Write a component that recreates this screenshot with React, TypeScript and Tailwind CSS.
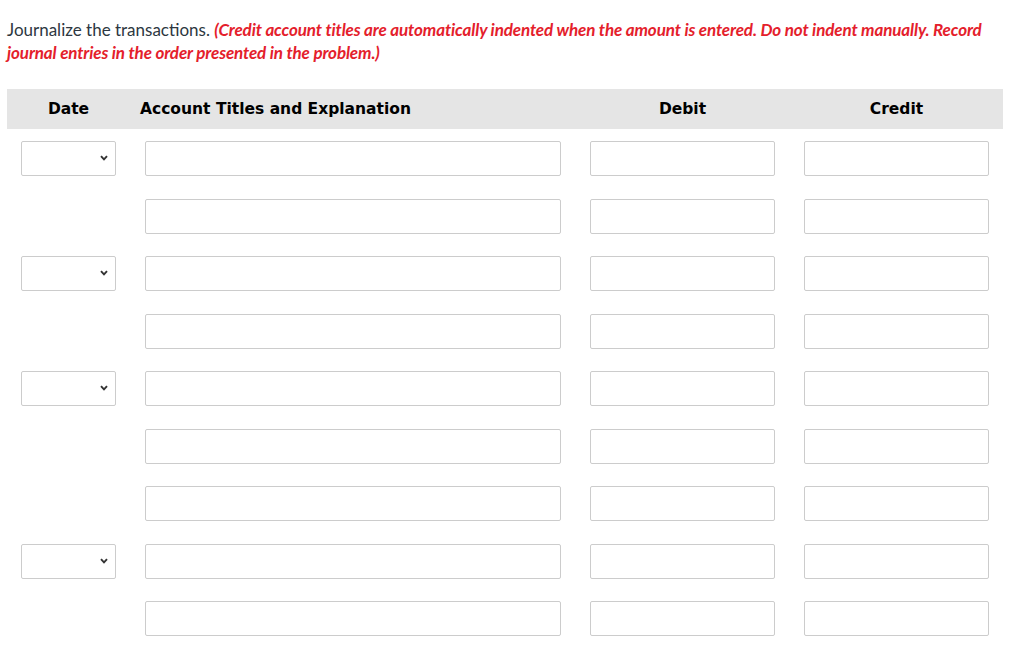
import React from 'react'

const ROWS = [true, false, true, false, true, false, false, true, false]

function DateSelect() {
  return (
    <div className="relative w-[95px] h-[35px] rounded-[2px] border border-[#cccccc] bg-white">
      <svg
        className="absolute right-[7px] top-[13px]"
        width="8"
        height="6"
        viewBox="0 0 8 6"
        fill="none"
      >
        <path d="M1 1.2L4 4.4L7 1.2" stroke="#333333" strokeWidth="1.9" />
      </svg>
    </div>
  )
}

function Box({ w }: { w: string }) {
  return <div className={`${w} h-[35px] rounded-[2px] border border-[#cccccc] bg-white`} />
}

export default function App() {
  return (
    <div className="min-h-screen bg-white pl-[7px] pr-[21px] pt-[18px]" style={{ fontFamily: 'Lato, "Open Sans", sans-serif' }}>
      <p className="text-[17px] leading-[23px] text-[#2d3741]">
        Journalize the transactions.{' '}
        <span className="font-bold italic text-[#e4202b] tracking-[-0.12px]">
          (Credit account titles are automatically indented when the amount is entered. Do not indent manually. Record journal entries in the order presented in the problem.)
        </span>
      </p>

      <div className="mt-[25px] w-[996px]">
        <div
          className="grid grid-cols-[123px_445px_215px_213px] h-[40px] items-center pt-[1px] bg-[#e5e5e5] text-[15.5px] font-bold text-black"
          style={{ fontFamily: 'Tahoma, "DejaVu Sans", Verdana, sans-serif' }}
        >
          <div className="text-center">Date</div>
          <div className="pl-[10px]">Account Titles and Explanation</div>
          <div className="text-center">Debit</div>
          <div className="text-center">Credit</div>
        </div>

        <div className="mt-[12px] flex flex-col gap-[22.5px]">
          {ROWS.map((hasDate, i) => (
            <div key={i} className="grid grid-cols-[123px_445px_215px_213px] items-center">
              <div className="flex justify-center">{hasDate && <DateSelect />}</div>
              <div className="pl-[15px]">
                <Box w="w-[416px]" />
              </div>
              <div className="flex justify-center">
                <Box w="w-[185px]" />
              </div>
              <div className="flex justify-center">
                <Box w="w-[185px]" />
              </div>
            </div>
          ))}
        </div>
      </div>
    </div>
  )
}
